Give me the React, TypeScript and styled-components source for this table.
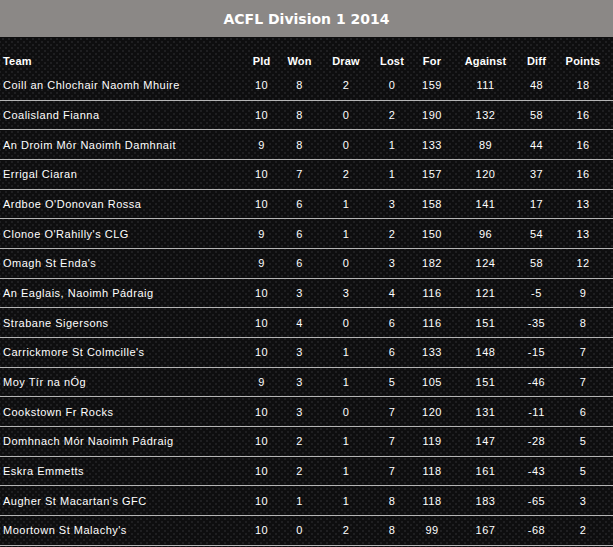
import React from "react";
import styled, { createGlobalStyle } from "styled-components";

const GlobalStyle = createGlobalStyle`
  html, body { margin: 0; padding: 0; background: #0e0e0f; }
  body { font-family: "Liberation Sans", Arial, sans-serif; }
`;

const Page = styled.div`
  width: 613px;
  height: 547px;
  overflow: hidden;
  background-color: #0e0e0f;
  background-image: radial-gradient(circle, #1f1f21 0.9px, transparent 1.4px),
    radial-gradient(circle, #1f1f21 0.9px, transparent 1.4px);
  background-size: 6px 6px;
  background-position: 0 0, 3px 3px;
`;

const TitleBar = styled.div`
  height: 37px;
  background: #8b8886;
  display: flex;
  align-items: center;
  justify-content: center;
  color: #ffffff;
  font-family: "DejaVu Sans", Verdana, sans-serif;
  font-weight: bold;
  font-size: 14px;
  box-sizing: border-box;
`;

const Table = styled.table`
  width: 613px;
  table-layout: fixed;
  border-collapse: separate;
  border-spacing: 0;
  color: #ffffff;
`;

const HeadCell = styled.th<{ $align?: string }>`
  padding: 14px 0 0 ${(p) => (p.$align === "left" ? "3px" : "0")};
  height: 20px;
  line-height: 20px;
  font-size: 11px;
  font-weight: bold;
  letter-spacing: 0.2px;
  text-align: ${(p) => p.$align || "center"};
  vertical-align: middle;
`;

const Row = styled.tr`
  height: 29.667px;
`;

const Cell = styled.td<{ $align?: string }>`
  padding: 0 0 0 ${(p) => (p.$align === "left" ? "3px" : "0")};
  font-size: 11px;
  letter-spacing: 0.5px;
  text-align: ${(p) => p.$align || "center"};
  vertical-align: middle;
  border-bottom: 1px solid #b4b4b4;
  white-space: nowrap;
`;

const columns = [
  { key: "Team", width: 245 },
  { key: "Pld", width: 33 },
  { key: "Won", width: 43 },
  { key: "Draw", width: 50 },
  { key: "Lost", width: 42 },
  { key: "For", width: 38 },
  { key: "Against", width: 69 },
  { key: "Diff", width: 33 },
  { key: "Points", width: 60 },
];

const rows: (string | number)[][] = [
  ["Coill an Chlochair Naomh Mhuire", 10, 8, 2, 0, 159, 111, 48, 18],
  ["Coalisland Fianna", 10, 8, 0, 2, 190, 132, 58, 16],
  ["An Droim Mór Naoimh Damhnait", 9, 8, 0, 1, 133, 89, 44, 16],
  ["Errigal Ciaran", 10, 7, 2, 1, 157, 120, 37, 16],
  ["Ardboe O'Donovan Rossa", 10, 6, 1, 3, 158, 141, 17, 13],
  ["Clonoe O'Rahilly's CLG", 9, 6, 1, 2, 150, 96, 54, 13],
  ["Omagh St Enda's", 9, 6, 0, 3, 182, 124, 58, 12],
  ["An Eaglais, Naoimh Pádraig", 10, 3, 3, 4, 116, 121, -5, 9],
  ["Strabane Sigersons", 10, 4, 0, 6, 116, 151, -35, 8],
  ["Carrickmore St Colmcille's", 10, 3, 1, 6, 133, 148, -15, 7],
  ["Moy Tír na nÓg", 9, 3, 1, 5, 105, 151, -46, 7],
  ["Cookstown Fr Rocks", 10, 3, 0, 7, 120, 131, -11, 6],
  ["Domhnach Mór Naoimh Pádraig", 10, 2, 1, 7, 119, 147, -28, 5],
  ["Eskra Emmetts", 10, 2, 1, 7, 118, 161, -43, 5],
  ["Augher St Macartan's GFC", 10, 1, 1, 8, 118, 183, -65, 3],
  ["Moortown St Malachy's", 10, 0, 2, 8, 99, 167, -68, 2],
];

export default function App() {
  return (
    <>
      <GlobalStyle />
      <Page>
        <TitleBar>ACFL Division 1 2014</TitleBar>
        <Table>
          <colgroup>
            {columns.map((c) => (
              <col key={c.key} style={{ width: c.width }} />
            ))}
          </colgroup>
          <thead>
            <tr>
              {columns.map((c, i) => (
                <HeadCell key={c.key} $align={i === 0 ? "left" : "center"}>
                  {c.key}
                </HeadCell>
              ))}
            </tr>
          </thead>
          <tbody>
            {rows.map((r) => (
              <Row key={String(r[0])}>
                {r.map((v, i) => (
                  <Cell key={i} $align={i === 0 ? "left" : "center"}>
                    {v}
                  </Cell>
                ))}
              </Row>
            ))}
          </tbody>
        </Table>
      </Page>
    </>
  );
}
